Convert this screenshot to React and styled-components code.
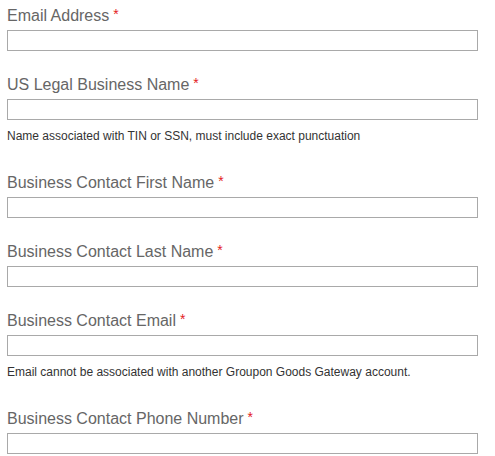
import styled, { createGlobalStyle } from 'styled-components';

const GlobalStyle = createGlobalStyle`
  html, body {
    margin: 0;
    padding: 0;
    background: #fff;
  }
  body {
    font-family: Arial, "Liberation Sans", sans-serif;
  }
`;

const Form = styled.form`
  display: flex;
  flex-direction: column;
  gap: 23px;
  width: 471px;
  padding: 5px 0 0 7px;
`;

const Field = styled.div`
  display: flex;
  flex-direction: column;
`;

const Label = styled.label`
  display: block;
  font-size: 16px;
  line-height: 18px;
  color: #666;
  margin-bottom: 5px;
`;

const Required = styled.span`
  color: #e31b23;
  font-size: 14px;
  margin-left: 4px;
  vertical-align: 2px;
`;

const Input = styled.input`
  display: block;
  box-sizing: border-box;
  width: 100%;
  height: 21px;
  margin: 0;
  padding: 1px 4px;
  border: 1px solid #a9a9a9;
  border-radius: 0;
  background: #fff;
  font-family: inherit;
  font-size: 13px;
  outline: none;
`;

const Help = styled.p`
  margin: 9px 0 6px;
  font-size: 12px;
  line-height: 14px;
  color: #333;
`;

const fields = [
  { label: 'Email Address', type: 'email' },
  {
    label: 'US Legal Business Name',
    help: 'Name associated with TIN or SSN, must include exact punctuation',
  },
  { label: 'Business Contact First Name' },
  { label: 'Business Contact Last Name' },
  {
    label: 'Business Contact Email',
    type: 'email',
    help: 'Email cannot be associated with another Groupon Goods Gateway account.',
  },
  { label: 'Business Contact Phone Number', type: 'tel' },
];

export default function App() {
  return (
    <>
      <GlobalStyle />
      <Form>
        {fields.map((f, i) => (
          <Field key={i}>
            <Label htmlFor={`field-${i}`}>
              {f.label}
              <Required>*</Required>
            </Label>
            <Input id={`field-${i}`} type={f.type || 'text'} />
            {f.help && <Help>{f.help}</Help>}
          </Field>
        ))}
      </Form>
    </>
  );
}
